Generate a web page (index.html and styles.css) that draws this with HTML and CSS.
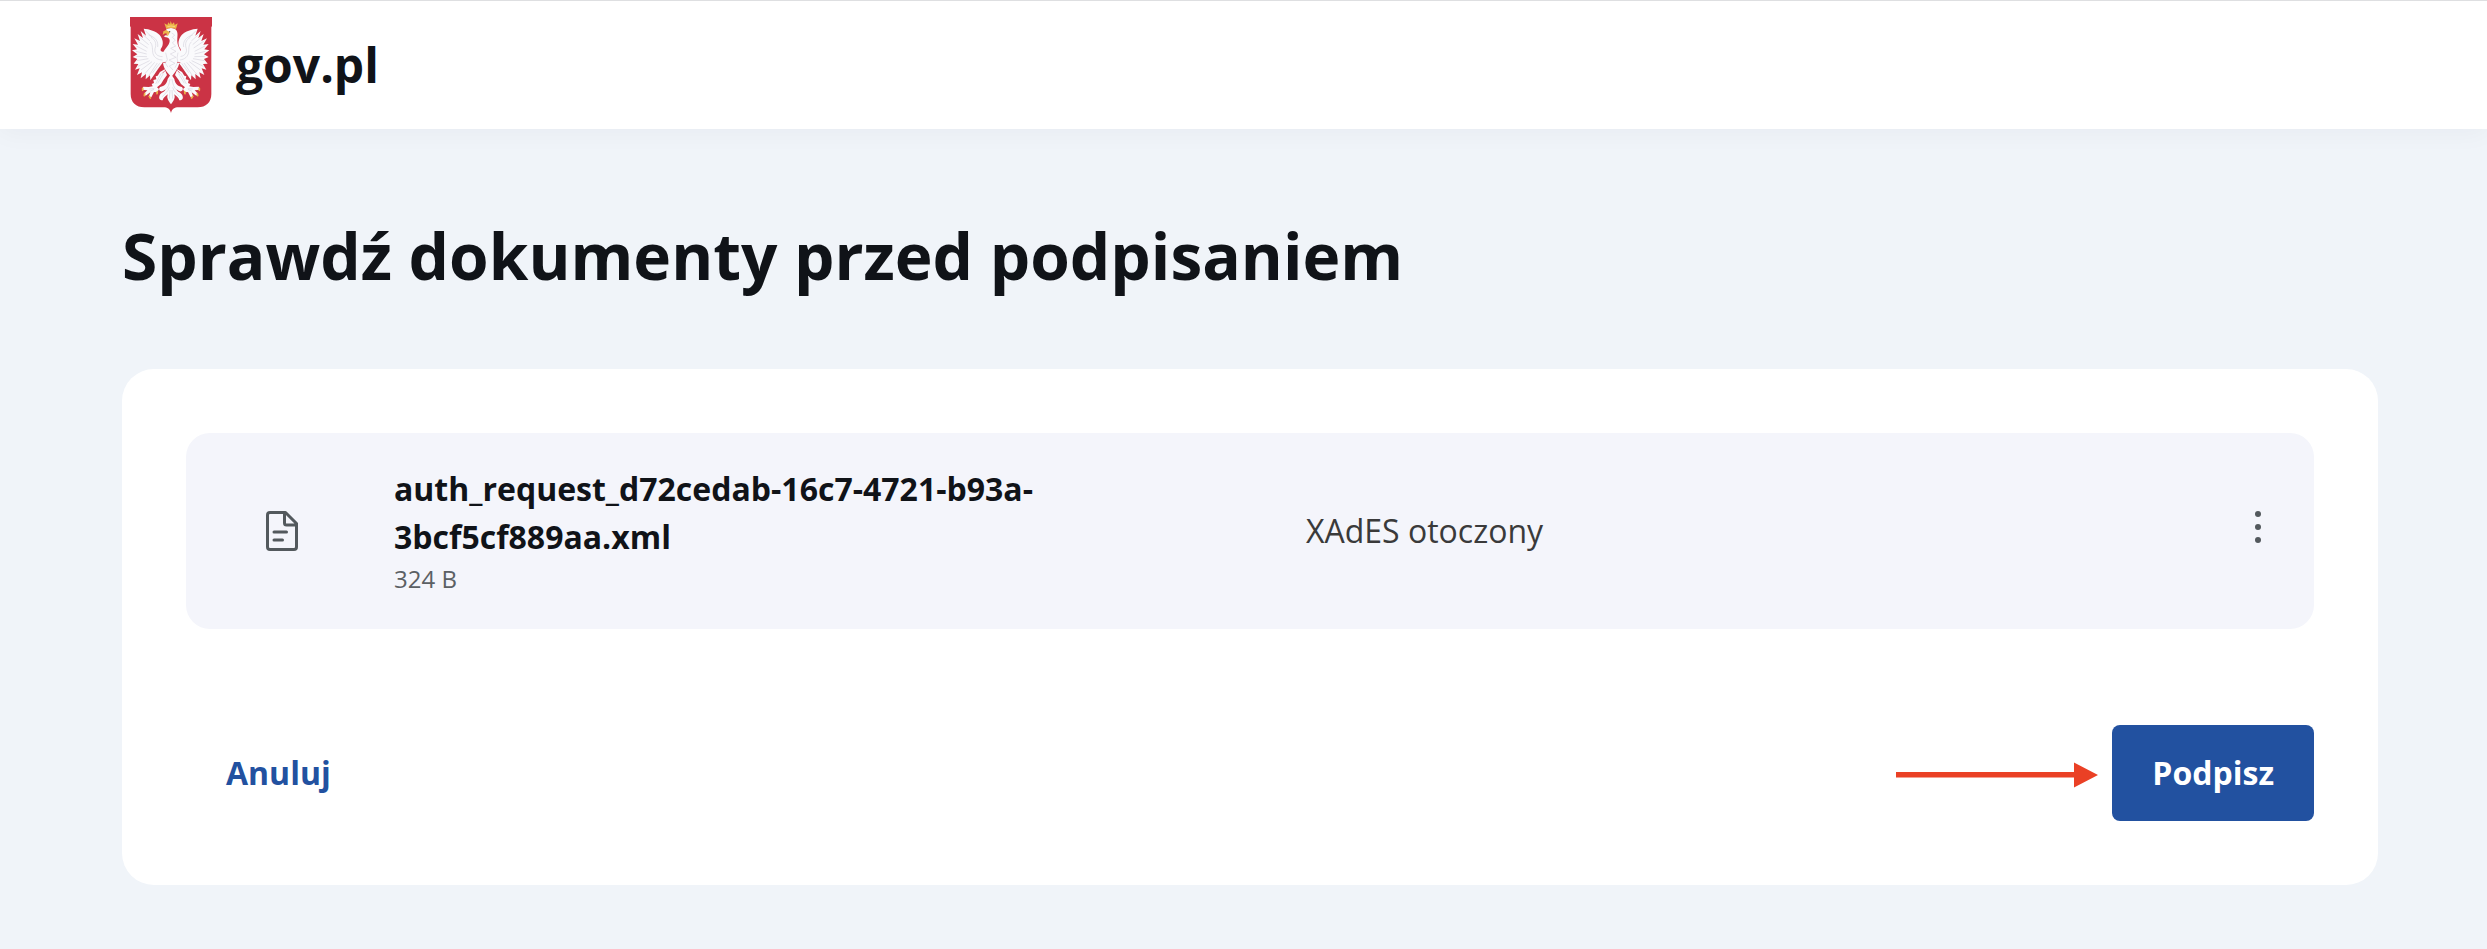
FILE: index.html
```html
<!DOCTYPE html>
<html lang="pl">
<head>
  <meta charset="utf-8">
  <meta name="viewport" content="width=device-width, initial-scale=1">
  <title>Sprawdź dokumenty przed podpisaniem</title>
  <link rel="stylesheet" href="styles.css">
</head>
<body>
  <header class="header">
    <a class="brand" href="#">
      <svg class="brand-emblem" viewBox="60 51 246 288" aria-hidden="true">
        <defs>
          <g id="wing">
            <path fill="#fafafc" d="M180 186 L160 186 C150 198 142 210 134 222 L121 241 L120 226 L107 238 L108 222 L92 235 L96 217 L81 225 L89 205 L75 209 L85 192 L71 191 L82 177 L68 171 L82 163 L66 151 L81 148 L68 132 L84 134 L73 115 L90 123 L83 102 L99 114 L92 93 L108 107 L101 86 C118 87 139 94 149 105 C160 118 161 134 154 144 C149 151 153 156 162 155 L184 150 Z"/>
            <path fill="none" stroke="#d6d4de" stroke-width="2" d="M106 92 L126 112 M99 104 L120 123 M91 113 L116 134 M83 124 L113 144 M79 138 L110 154 M78 154 L110 162 M79 169 L111 170 M80 182 L115 176 M84 199 L119 182 M93 210 L126 185 M104 222 L134 187 M116 228 L142 189 M128 218 L149 190 M116 105 C136 111 146 125 143 141 M123 112 C137 120 140 132 135 146 C132 160 142 170 158 170 M120 126 C130 134 126 151 129 161 C133 174 145 180 158 180"/>
          </g>
          <g id="leg">
            <path fill="#fafafc" d="M164 208 L150 216 L143 227 L137 229 L139 238 L130 240 L132 249 L125 252 L128 259 L116 261 L100 260 L96 269 L112 271 L102 281 L107 287 L121 277 L116 290 L124 292 L132 276 L142 277 L147 267 L141 262 L153 252 L160 240 L171 225 Z"/>
            <path fill="none" stroke="#d6d4de" stroke-width="2" d="M153 221 L137 252 M160 221 L143 250 M118 267 L133 266 M120 274 L132 268"/>
            <path fill="none" stroke="#ecb64a" stroke-width="5" stroke-linecap="round" d="M98 265 V271 M104 281 L103 287 M118 289 L121 294 M142 275 L141 281"/>
          </g>
          <g id="tail-side">
            <path fill="#fafafc" d="M183 222 L173 237 C171 249 165 258 153 260 C145 262 146 272 153 274 C159 275 164 270 167 268 C164 277 153 277 149 286 C145 296 149 301 158 301 C159 294 165 290 174 283 C169 290 173 301 183 313 Z"/>
            <path fill="none" stroke="#d6d4de" stroke-width="2" d="M180 237 C178 252 174 264 166 270 M178 262 C175 275 164 281 157 290 M180 270 L178 296"/>
          </g>
        </defs>
        <path fill="#cb3345" d="M60 51 H306 V78 L304 82 V282 C304 307 288 322 263 322 H205 C194 322 186 327 183 339 C180 327 172 322 161 322 H103 C78 322 62 307 62 282 V82 L60 78 Z"/>
        <use href="#wing"/>
        <use href="#wing" transform="matrix(-1 0 0 1 364 0)"/>
        <use href="#leg"/>
        <use href="#leg" transform="matrix(-1 0 0 1 366 0)"/>
        <use href="#tail-side"/>
        <use href="#tail-side" transform="matrix(-1 0 0 1 366 0)"/>
        <path fill="#fafafc" d="M167 91 C173 82 194 82 200 92 C205 101 201 112 202 126 C203 141 214 149 212 164 C210 187 206 202 196 215 L184 231 L170 215 C158 201 157 181 159 162 C161 148 178 137 179 124 C180 116 173 112 167 112 L161 109 L173 103 Z"/>
        <path fill="none" stroke="#d9d7e0" stroke-width="2" d="M185 99 L194 105 L187 112 L196 120 L187 129 L197 138 L182 145 L198 154 L181 162 L198 172 L177 180 L195 190 L178 198 L189 210 M167 158 L172 179 L166 189 L174 202 M204 158 L201 174 L204 186 L195 203"/>
        <path fill="none" stroke="#cb3345" stroke-width="2" d="M158 188 L167 187 M201 187 L211 188 M166 211 L157 220 M202 211 L210 220"/>
        <path fill="#ecb64a" d="M169 90 L160 94 L158 105 L165 100 L174 102 L166 107 L174 107 L180 97 Z"/>
        <circle cx="179" cy="95" r="2" fill="#59474d"/>
        <path fill="#ecb64a" d="M169 87 L163 70 L172 75 L175 67 L180 73 L182 63 L186 73 L192 67 L194 75 L203 70 L198 87 C188 83 178 83 169 87 Z"/>
        <path fill="none" stroke="#fae29b" stroke-width="2" d="M172 80 Q183 76 195 80"/>
      </svg>
      <span class="brand-name">gov.pl</span>
    </a>
  </header>

  <main class="page">
    <h1 class="title">Sprawdź dokumenty przed podpisaniem</h1>

    <section class="card">
      <div class="document">
        <svg class="document-icon" viewBox="0 0 32 40" aria-hidden="true">
          <path d="M4 1.5 H19.5 L30.500 12.5 V36 Q30.500 38.500 28 38.500 H4 Q1.500 38.500 1.500 36 V4 Q1.500 1.500 4 1.500 Z M18.500 2 V12 Q18.500 14 20.500 14 H30 M8 21 H20.500 M8 29 H16.500"/>
        </svg>
        <div class="document-info">
          <div class="document-name">auth_request_d72cedab-16c7-4721-b93a-3bcf5cf889aa.xml</div>
          <div class="document-size">324 B</div>
        </div>
        <div class="document-format">XAdES otoczony</div>
        <button class="menu-button" type="button" aria-label="Więcej opcji">
          <svg class="menu-icon" viewBox="0 0 6 32" aria-hidden="true">
            <circle cx="3" cy="3" r="3"/>
            <circle cx="3" cy="16" r="3"/>
            <circle cx="3" cy="29" r="3"/>
          </svg>
        </button>
      </div>

      <div class="actions">
        <button class="button button-text" type="button">Anuluj</button>
        <div class="actions-end">
          <svg class="arrow" viewBox="0 -4 202 30" aria-hidden="true">
            <path d="M0 10 H178 V0.500 L202 13 L178 25.500 V15.500 H0 Z"/>
          </svg>
          <button class="button button-primary" type="button">Podpisz</button>
        </div>
      </div>
    </section>
  </main>
</body>
</html>
```

FILE: styles.css
```css
* {
  box-sizing: border-box;
}

body {
  margin: 0;
  background: #f0f4f9;
  color: #101318;
  font-family: "Open Sans", "Noto Sans", sans-serif;
  font-size: 32px;
  line-height: 48px;
}

.header {
  padding: 16px 130px;
  border-top: 1px solid #dedfe1;
  background: #fff;
  box-shadow: 0 4px 24px rgba(32, 16, 48, 0.04);
}

.brand {
  display: inline-flex;
  align-items: center;
  gap: 24px;
  color: inherit;
  text-decoration: none;
  vertical-align: top;
}

.brand-emblem {
  width: 82px;
  height: 96px;
}

.brand-name {
  font-size: 48px;
  font-weight: 700;
  line-height: 64px;
}

.page {
  padding: 80px 109px 64px 122px;
}

.title {
  margin: 0 0 66px;
  font-size: 64px;
  font-weight: 700;
  line-height: 94px;
}

.card {
  padding: 64px;
  border-radius: 32px;
  background: #fff;
}

.document {
  display: grid;
  grid-template-columns: 192px minmax(0, 896fr) minmax(0, 912fr) 48px;
  align-items: center;
  column-gap: 16px;
  padding: 32px 32px 32px 0;
  border-radius: 24px;
  background: #f4f5fb;
}

.document-icon {
  justify-self: center;
  width: 32px;
  height: 40px;
  fill: none;
  stroke: #53595d;
  stroke-width: 3;
  stroke-linecap: round;
  stroke-linejoin: round;
}

.document-name {
  font-weight: 700;
}

.document-size {
  color: #5b6064;
  font-size: 24px;
  line-height: 36px;
}

.document-format {
  color: #3a3a3a;
}

.menu-button {
  display: grid;
  place-items: center;
  width: 48px;
  height: 48px;
  margin-bottom: 8px;
  padding: 0;
  border: 0;
  background: transparent;
}

.menu-icon {
  width: 6px;
  height: 32px;
  fill: #53595d;
}

.actions {
  display: flex;
  align-items: center;
  justify-content: space-between;
  margin-top: 96px;
}

.actions-end {
  display: flex;
  align-items: center;
  gap: 14px;
}

.arrow {
  width: 202px;
  height: 30px;
  fill: #ea4025;
}

.button {
  padding: 24px 40px;
  border: 0;
  border-radius: 8px;
  font: inherit;
  font-weight: 700;
}

.button-text {
  background: transparent;
  color: #2251a0;
}

.button-primary {
  background: #2251a0;
  color: #fff;
}
```
